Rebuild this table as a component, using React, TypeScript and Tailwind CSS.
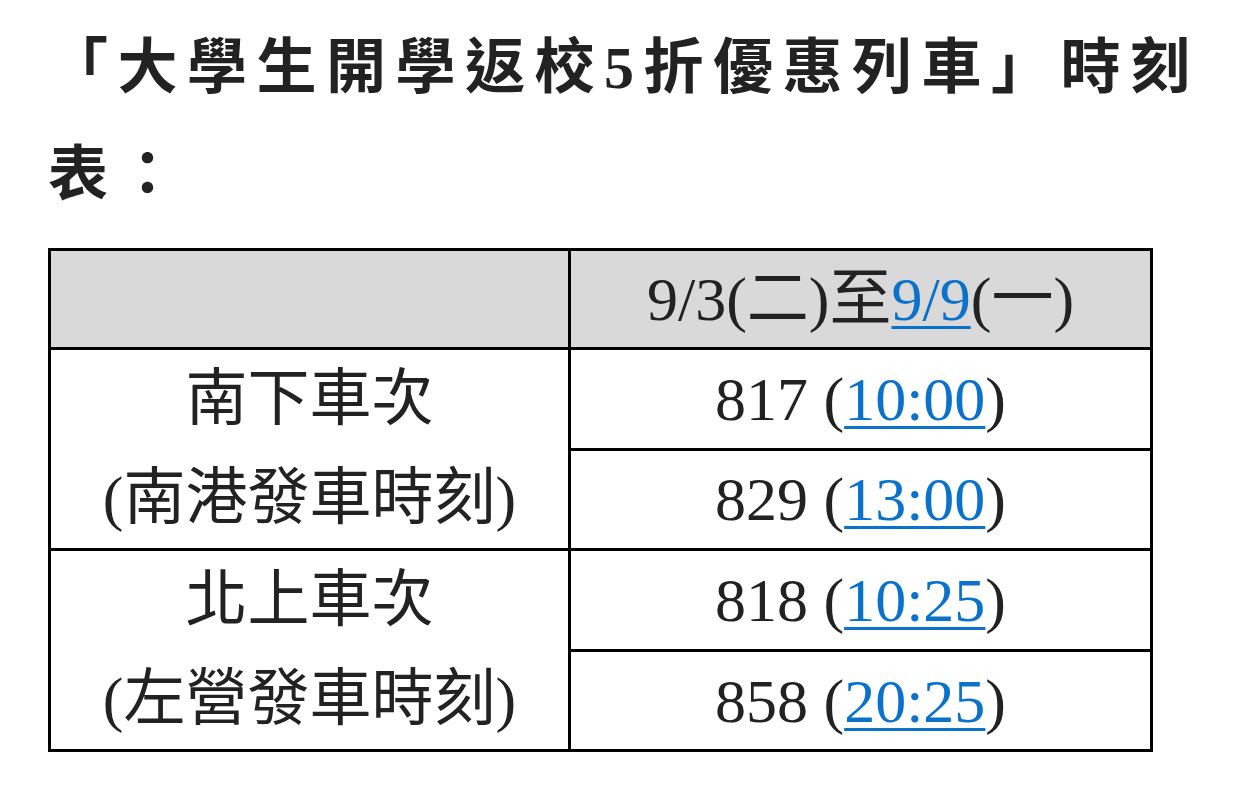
export default function App() {
  const font = { fontFamily: '"Liberation Serif", "Noto Sans CJK TC", serif' }

  const link = 'text-[#0b72cc] underline decoration-[3px] underline-offset-[6px]'

  return (
    <div className="bg-white min-h-[789px] pl-[48px] pr-[20px] pt-[15px] text-[#222222]" style={font}>
      <h1 className="text-[60px] font-bold leading-[107px] tracking-[9.5px]">
        「大學生開學返校5折優惠列車」時刻表：
      </h1>

      <table className="mt-[19px] w-[1105px] border-collapse border-[3px] border-black text-[62px] font-normal">
        <colgroup>
          <col className="w-[520px]" />
          <col />
        </colgroup>
        <tbody>
          <tr className="h-[99px] bg-[#d9d9d9]">
            <td className="border-[3px] border-black"></td>
            <td className="border-[3px] border-black text-center leading-none">
              9/3(二)至<a className={link}>9/9</a>(一)
            </td>
          </tr>
          <tr className="h-[100px]">
            <td rowSpan={2} className="border-[3px] border-black text-center leading-[99px]">
              南下車次
              <br />
              (南港發車時刻)
            </td>
            <td className="border-[3px] border-black text-center leading-none">
              817 (<a className={link}>10:00</a>)
            </td>
          </tr>
          <tr className="h-[100px]">
            <td className="border-[3px] border-black text-center leading-none">
              829 (<a className={link}>13:00</a>)
            </td>
          </tr>
          <tr className="h-[100px]">
            <td rowSpan={2} className="border-[3px] border-black text-center leading-[99px]">
              北上車次
              <br />
              (左營發車時刻)
            </td>
            <td className="border-[3px] border-black text-center leading-none">
              818 (<a className={link}>10:25</a>)
            </td>
          </tr>
          <tr className="h-[99px]">
            <td className="border-[3px] border-black text-center leading-none">
              858 (<a className={link}>20:25</a>)
            </td>
          </tr>
        </tbody>
      </table>
    </div>
  )
}
